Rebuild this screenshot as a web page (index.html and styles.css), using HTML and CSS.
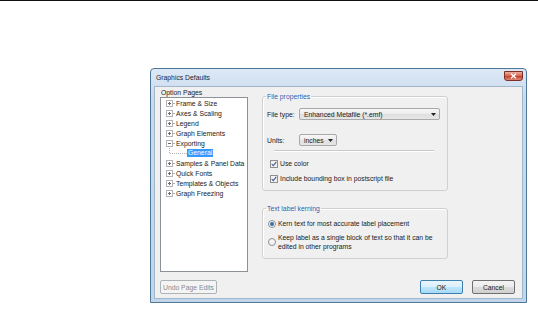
FILE: index.html
```html
<!DOCTYPE html>
<html>
<head>
<meta charset="utf-8">
<link rel="stylesheet" href="styles.css">
</head>
<body>
<div class="topline"></div>
<div class="dialog">
  <div class="titlebar">
    <span class="title">Graphics Defaults</span>
    <span class="close"><svg width="7" height="6" viewBox="0 0 7 6"><path d="M1 0.8L6 5.2M6 0.8L1 5.2" stroke="#fff" stroke-width="1.4"/></svg></span>
  </div>
  <div class="client">
    <div class="main">
      <div class="left">
        <div class="caption">Option Pages</div>
        <div class="tree">
          <div class="node"><svg class="exp" width="9" height="7" viewBox="0 0 9 7"><rect x="0.5" y="0.5" width="6" height="6" fill="#fff" stroke="#b4b4b4"/><path d="M2 3.5h3M3.5 2v3" stroke="#6a6a6a"/><path d="M7 3.5h2" stroke="#b0b0b0"/></svg><span>Frame &amp; Size</span></div>
          <div class="node"><svg class="exp" width="9" height="7" viewBox="0 0 9 7"><rect x="0.5" y="0.5" width="6" height="6" fill="#fff" stroke="#b4b4b4"/><path d="M2 3.5h3M3.5 2v3" stroke="#6a6a6a"/><path d="M7 3.5h2" stroke="#b0b0b0"/></svg><span>Axes &amp; Scaling</span></div>
          <div class="node"><svg class="exp" width="9" height="7" viewBox="0 0 9 7"><rect x="0.5" y="0.5" width="6" height="6" fill="#fff" stroke="#b4b4b4"/><path d="M2 3.5h3M3.5 2v3" stroke="#6a6a6a"/><path d="M7 3.5h2" stroke="#b0b0b0"/></svg><span>Legend</span></div>
          <div class="node"><svg class="exp" width="9" height="7" viewBox="0 0 9 7"><rect x="0.5" y="0.5" width="6" height="6" fill="#fff" stroke="#b4b4b4"/><path d="M2 3.5h3M3.5 2v3" stroke="#6a6a6a"/><path d="M7 3.5h2" stroke="#b0b0b0"/></svg><span>Graph Elements</span></div>
          <div class="node"><svg class="exp" width="9" height="7" viewBox="0 0 9 7"><rect x="0.5" y="0.5" width="6" height="6" fill="#fff" stroke="#b4b4b4"/><path d="M2 3.5h3" stroke="#6a6a6a"/><path d="M7 3.5h2" stroke="#b0b0b0"/></svg><span>Exporting</span></div>
          <div class="node"><svg class="link" width="21" height="10" viewBox="0 0 21 10"><path d="M3.5 0v5.5H21" fill="none" stroke="#b0b0b0" stroke-dasharray="1 1"/></svg><span class="selected">General</span></div>
          <div class="node"><svg class="exp" width="9" height="7" viewBox="0 0 9 7"><rect x="0.5" y="0.5" width="6" height="6" fill="#fff" stroke="#b4b4b4"/><path d="M2 3.5h3M3.5 2v3" stroke="#6a6a6a"/><path d="M7 3.5h2" stroke="#b0b0b0"/></svg><span>Samples &amp; Panel Data</span></div>
          <div class="node"><svg class="exp" width="9" height="7" viewBox="0 0 9 7"><rect x="0.5" y="0.5" width="6" height="6" fill="#fff" stroke="#b4b4b4"/><path d="M2 3.5h3M3.5 2v3" stroke="#6a6a6a"/><path d="M7 3.5h2" stroke="#b0b0b0"/></svg><span>Quick Fonts</span></div>
          <div class="node"><svg class="exp" width="9" height="7" viewBox="0 0 9 7"><rect x="0.5" y="0.5" width="6" height="6" fill="#fff" stroke="#b4b4b4"/><path d="M2 3.5h3M3.5 2v3" stroke="#6a6a6a"/><path d="M7 3.5h2" stroke="#b0b0b0"/></svg><span>Templates &amp; Objects</span></div>
          <div class="node"><svg class="exp" width="9" height="7" viewBox="0 0 9 7"><rect x="0.5" y="0.5" width="6" height="6" fill="#fff" stroke="#b4b4b4"/><path d="M2 3.5h3M3.5 2v3" stroke="#6a6a6a"/><path d="M7 3.5h2" stroke="#b0b0b0"/></svg><span>Graph Freezing</span></div>
        </div>
      </div>
      <div class="right">
        <fieldset class="group g1">
          <legend>File properties</legend>
          <div class="row r1">
            <span class="lbl">File type:</span>
            <div class="combo wide"><span>Enhanced Metafile (*.emf)</span><svg width="5" height="3" viewBox="0 0 5 3"><path d="M0 0h5L2.5 3z" fill="#222"/></svg></div>
          </div>
          <div class="row r2">
            <span class="lbl">Units:</span>
            <div class="combo narrow"><span>inches</span><svg width="5" height="3" viewBox="0 0 5 3"><path d="M0 0h5L2.5 3z" fill="#222"/></svg></div>
          </div>
          <div class="sep"></div>
          <div class="check c1"><svg width="8" height="8" viewBox="0 0 8 8"><rect x="0.5" y="0.5" width="7" height="7" fill="#f3f3f3" stroke="#8e8f8f"/><path d="M1.8 4.1L3.3 5.7L6.3 1.9" fill="none" stroke="#4a5f8c" stroke-width="1.2"/></svg><span>Use color</span></div>
          <div class="check c2"><svg width="8" height="8" viewBox="0 0 8 8"><rect x="0.5" y="0.5" width="7" height="7" fill="#f3f3f3" stroke="#8e8f8f"/><path d="M1.8 4.1L3.3 5.7L6.3 1.9" fill="none" stroke="#4a5f8c" stroke-width="1.2"/></svg><span>Include bounding box in postscript file</span></div>
        </fieldset>
        <fieldset class="group g2">
          <legend>Text label kerning</legend>
          <div class="radio o1"><svg width="8" height="8" viewBox="0 0 8 8"><circle cx="4" cy="4" r="3.5" fill="#f3f3f3" stroke="#8e8f8f"/><circle cx="4" cy="4" r="2" fill="#3f6ea6"/></svg><span>Kern text for most accurate label placement</span></div>
          <div class="radio o2"><svg width="8" height="8" viewBox="0 0 8 8"><circle cx="4" cy="4" r="3.5" fill="#f3f3f3" stroke="#8e8f8f"/></svg><span>Keep label as a single block of text so that it can be<br>edited in other programs</span></div>
        </fieldset>
      </div>
    </div>
    <div class="buttons">
      <button class="btn undo" disabled>Undo Page Edits</button>
      <span class="spacer"></span>
      <button class="btn ok">OK</button>
      <button class="btn cancel">Cancel</button>
    </div>
  </div>
</div>
</body>
</html>
```

FILE: styles.css
```css
* { box-sizing: border-box; }
html, body { margin: 0; padding: 0; }
body {
  width: 538px;
  height: 332px;
  overflow: hidden;
  background: #ffffff;
  font-family: "Liberation Sans", Arial, sans-serif;
  font-size: 6.8px;
  color: #1a1a1a;
}
.topline { height: 1px; background: #111; }

.dialog {
  margin: 67px 0 0 150px;
  width: 377px;
  border: 1px solid #4f7898;
  border-radius: 4px 4px 0 0;
  background: linear-gradient(#dce8f5, #c9daee 30px, #c2d5ea);
  padding: 0 3px 3px;
}
.titlebar {
  height: 17px;
  display: flex;
  justify-content: space-between;
}
.title { line-height: 17px; padding-left: 2px; color: #1c2733; }
.close {
  width: 19px;
  height: 10px;
  margin-top: 2px;
  border: 1px solid #7d3027;
  border-radius: 0 0 3px 3px;
  background: linear-gradient(#eab0a2, #d76a55 45%, #c8432f 55%, #db8a76);
  display: flex;
  align-items: center;
  justify-content: center;
}
.client {
  background: #f0f0f0;
  border: 1px solid #a3b7cb;
  padding: 1px 5px 4px 5px;
}
.main { display: flex; gap: 14px; }
.left { width: 88px; display: flex; flex-direction: column; }
.caption { line-height: 9px; padding-left: 1px; }
.tree {
  height: 175px;
  background: #fff;
  border: 1px solid #8c9097;
  padding-left: 5px;
}
.node { height: 10px; display: flex; align-items: center; white-space: nowrap; }
.exp { flex: none; margin-right: 1px; }
.link { flex: none; }
.selected {
  background: #3399ff;
  color: #fff;
  line-height: 8px;
  padding: 0 1px;
}

.right { width: 186px; display: flex; flex-direction: column; }
.group {
  margin: 0;
  min-width: 0;
  border: 1px solid #d0d0d0;
  border-radius: 3px;
  padding: 0 4px 7px;
  box-shadow: inset 1px 1px 0 #fff;
}
.group legend {
  padding: 0 1px;
  margin-left: -1px;
  line-height: 9px;
  color: #2b5fae;
}
.g1 { margin-top: 4px; }
.g2 { margin-top: 13px; }

.row { display: flex; align-items: center; height: 12px; }
.r1 { margin-top: 7px; }
.r2 { margin-top: 14px; }
.lbl { width: 32px; }
.combo {
  height: 12px;
  border: 1px solid #a9a9a9;
  border-radius: 2px;
  background: linear-gradient(#f6f6f6, #ececec 50%, #dfdfdf 51%, #e6e6e6);
  display: flex;
  align-items: center;
  justify-content: space-between;
  padding: 0 3px 0 4px;
}
.wide { width: 141px; }
.narrow { width: 38px; }

.sep {
  height: 2px;
  margin: 4px 9px 0 7px;
  border-top: 1px solid #c9c9c9;
  border-bottom: 1px solid #ffffff;
}
.check { display: flex; align-items: center; gap: 2px; line-height: 9px; padding-left: 3px; white-space: nowrap; }
.c1 { margin-top: 7px; }
.c2 { margin-top: 6px; }

.radio { display: flex; align-items: center; gap: 2px; line-height: 9px; padding-left: 1px; white-space: nowrap; }
.o1 { margin-top: 6px; }
.o2 { margin-top: 5px; }

.buttons { display: flex; align-items: center; gap: 9px; margin-top: 8px; padding-right: 2px; }
.spacer { flex: 1; }
.btn {
  font-family: inherit;
  font-size: 6.8px;
  height: 14px;
  padding: 0;
  border: 1px solid #707070;
  border-radius: 2px;
  background: linear-gradient(#f3f3f3, #ebebeb 50%, #dddddd 51%, #cfcfcf);
  color: #1a1a1a;
}
.undo { width: 57px; color: #8a8a8a; border-color: #adb2b5; background: #f4f4f4; }
.ok { width: 43px; border-color: #3c7fb1; background: linear-gradient(#eaf6fd, #d9f0fc 50%, #bee6fd 51%, #a7d9f5); }
.cancel { width: 43px; }
```
